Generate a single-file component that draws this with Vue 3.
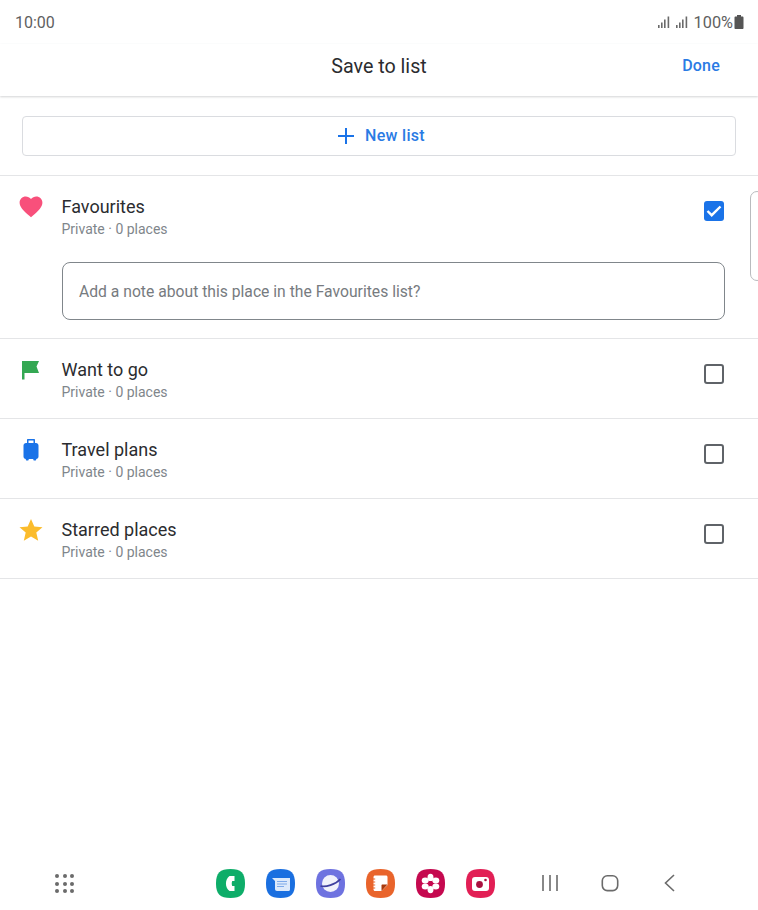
<script setup>
const lists = [
  { name: 'Favourites', icon: 'heart', checked: true },
  { name: 'Want to go', icon: 'flag', checked: false },
  { name: 'Travel plans', icon: 'bag', checked: false },
  { name: 'Starred places', icon: 'star', checked: false },
]
const squircle = 'M14.5 0C25 0 29 4 29 14.5S25 29 14.5 29 0 25 0 14.5 4 0 14.5 0Z'
const dots = [0, 1, 2, 3, 4, 5, 6, 7, 8]
</script>

<template>
  <div class="page">
    <div class="status">
      <span class="time">10:00</span>
      <span class="status-right">
        <svg class="signal" width="13" height="12" viewBox="0 0 13 12"><g fill="#6a6a6a"><rect x="0" y="9" width="1.6" height="3"/><rect x="3" y="6.5" width="1.6" height="5.5"/><rect x="6" y="3.5" width="1.6" height="8.5"/><rect x="9.6" y="0.5" width="1.6" height="11.5"/></g></svg>
        <svg class="signal" width="13" height="12" viewBox="0 0 13 12"><g fill="#6a6a6a"><rect x="0" y="9" width="1.6" height="3"/><rect x="3" y="6.5" width="1.6" height="5.5"/><rect x="6" y="3.5" width="1.6" height="8.5"/><rect x="9.6" y="0.5" width="1.6" height="11.5"/></g></svg>
        <span class="pct">100%</span>
        <svg class="battery" width="10" height="14" viewBox="0 0 10 14"><path fill="#555" d="M3 0h4v1.5h1.4c.7 0 1.1.5 1.1 1.1v10.3c0 .6-.4 1.1-1.1 1.1H1.6C.9 14 .5 13.5.5 12.9V2.6c0-.6.4-1.1 1.1-1.1H3Z"/></svg>
      </span>
    </div>

    <header class="header">
      <span class="title">Save to list</span>
      <span class="done">Done</span>
    </header>

    <section class="new-wrap">
      <button class="new-btn">
        <svg width="18" height="18" viewBox="0 0 18 18"><path d="M9 1v16M1 9h16" stroke="#1a73e8" stroke-width="2" fill="none"/></svg>
        <span>New list</span>
      </button>
    </section>

    <section v-for="l in lists" :key="l.name" class="item">
      <div class="row">
        <span class="icon">
          <svg v-if="l.icon === 'heart'" width="24" height="24" viewBox="0 0 24 24"><path fill="#f8507b" d="M12 22.3 10.3 20.8C4.4 15.4.6 12 .6 7.7.6 4.3 3.3 1.6 6.8 1.6c1.9 0 3.9.9 5.2 2.4 1.3-1.5 3.300-2.400 5.200-2.400 3.500 0 6.200 2.700 6.200 6.100 0 4.300-3.800 7.700-9.700 13.100Z"/></svg>
          <svg v-else-if="l.icon === 'flag'" width="24" height="24" viewBox="0 0 24 24"><path fill="#34a853" d="M3 3h17l-2.500 5.500L20 15H5.500v6.500H3Z"/></svg>
          <svg v-else-if="l.icon === 'bag'" width="24" height="24" viewBox="0 0 24 24"><path fill="#1a73e8" d="M9 1h6c.6 0 1 .4 1 1v3h1c1.400 0 2.500 1.100 2.500 2.500v11c0 1.300-1 2.400-2.300 2.500v.5c0 .6-.4 1-1 1h-.9c-.6 0-1-.4-1-1V21H9.700v.5c0 .6-.4 1-1 1h-.9c-.6 0-1-.4-1-1V21c-1.300-.1-2.300-1.200-2.300-2.500v-11C4.500 6.100 5.600 5 7 5h1V2c0-.6.400-1 1-1Zm.5 1.500V5h5V2.500Z"/></svg>
          <svg v-else width="24" height="24" viewBox="0 0 24 24"><path fill="#fbbc2c" d="m12 .9 3.300 7.600 8.200.7-6.200 5.400 1.900 8.100L12 18.500l-7.200 4.200 1.900-8.100L.5 9.200l8.200-.7Z"/></svg>
        </span>
        <div class="text">
          <div class="name">{{ l.name }}</div>
          <div class="meta">Private · 0 places</div>
        </div>
        <span v-if="l.checked" class="check on">
          <svg width="20" height="20" viewBox="0 0 20 20"><path d="m3.500 10 4.200 4.200 8.800-8.700" stroke="#fff" stroke-width="2.400" fill="none"/></svg>
        </span>
        <span v-else class="check"></span>
      </div>
      <div v-if="l.checked" class="note">Add a note about this place in the Favourites list?</div>
    </section>

    <span class="handle"></span>

    <footer class="dock">
      <span class="grid"><i v-for="d in dots" :key="d"></i></span>
      <div class="apps">
        <svg width="29" height="29" viewBox="0 0 29 29"><path fill="#0ead69" :d="squircle"/><path fill="#fff" d="M13.500 7h5v5h-2.300c-.6 1.500-.6 3.300 0 5h2.300v5h-5C8.800 18.500 8.800 10.500 13.500 7Z"/></svg>
        <svg width="29" height="29" viewBox="0 0 29 29"><path fill="#1a6fe0" :d="squircle"/><path fill="#dce9fb" d="M6 9h18v11.500c0 .8-.6 1.500-1.500 1.500H11c-1.200 0-2-.8-2-2V12Z"/><path stroke="#7da9ea" stroke-width="1.200" d="M11 12.500h10M11 15h10M11 17.500h7"/></svg>
        <svg width="29" height="29" viewBox="0 0 29 29"><path fill="#6e72e0" :d="squircle"/><circle cx="14.500" cy="14.500" r="8.500" fill="#f1f1fb"/><path fill="none" stroke="#3f3f9e" stroke-width="1.800" d="M4.500 17c5 1.500 15-1.500 20-7"/></svg>
        <svg width="29" height="29" viewBox="0 0 29 29"><path fill="#e9642b" :d="squircle"/><path fill="#fff" d="M9 6.500h11c.8 0 1.500.7 1.500 1.500v8l-6 6H9c-.8 0-1.500-.7-1.500-1.500V8c0-.8.700-1.500 1.500-1.500Z"/><path stroke="#e9642b" stroke-width="1.100" d="M6.800 10h2.400M6.800 13h2.400M6.800 16h2.400M6.800 19h2.400"/><path fill="#a8390d" d="M21.500 15.500h-5c-.6 0-1 .4-1 1v5.500Z"/></svg>
        <svg width="29" height="29" viewBox="0 0 29 29"><path fill="#c5094f" :d="squircle"/><g fill="#fff"><ellipse cx="14.500" cy="8.400" rx="3" ry="3.600"/><ellipse cx="14.500" cy="20.600" rx="3" ry="3.600"/><ellipse cx="9.200" cy="11.400" rx="3.500" ry="3"/><ellipse cx="19.800" cy="11.400" rx="3.500" ry="3"/><ellipse cx="9.200" cy="17.600" rx="3.500" ry="3"/><ellipse cx="19.800" cy="17.600" rx="3.500" ry="3"/></g><circle cx="14.500" cy="14.500" r="1.200" fill="#c5094f"/></svg>
        <svg width="29" height="29" viewBox="0 0 29 29"><path fill="#e21f55" :d="squircle"/><rect x="6" y="8" width="17" height="14" rx="3" fill="#fff"/><circle cx="13.500" cy="15.500" r="3.400" fill="#a9103f"/><circle cx="19.500" cy="11" r="1.300" fill="#a9103f"/></svg>
      </div>
      <div class="nav">
        <svg width="18" height="18" viewBox="0 0 18 18"><path d="M2 1v16M9 1v16M16 1v16" stroke="#6b6b6b" stroke-width="1.600" fill="none"/></svg>
        <svg width="18" height="18" viewBox="0 0 18 18"><rect x="1.300" y="1.800" width="15.400" height="14.800" rx="5" stroke="#6b6b6b" stroke-width="1.600" fill="none"/></svg>
        <svg width="18" height="18" viewBox="0 0 18 18"><path d="M13 1 4.500 9 13 17" stroke="#6b6b6b" stroke-width="1.600" fill="none"/></svg>
      </div>
    </footer>
  </div>
</template>

<style>
html, body { margin: 0; background: #fff; }
</style>

<style scoped>
.page {
  position: relative;
  width: 758px;
  height: 910px;
  overflow: hidden;
  display: flex;
  flex-direction: column;
  background: #fff;
  font-family: Roboto, "Liberation Sans", sans-serif;
  color: #202124;
}
.status {
  height: 44px;
  flex: none;
  display: flex;
  align-items: center;
  justify-content: space-between;
  padding: 0 14px 0 15px;
  color: #5f5f5f;
  font-size: 16px;
}
.status-right { display: flex; align-items: center; }
.signal { margin-right: 5px; }
.pct { font-size: 16.3px; margin-right: 1px; }
.header {
  position: relative;
  height: 52px;
  flex: none;
  display: flex;
  align-items: center;
  justify-content: center;
  box-sizing: border-box;
  padding-bottom: 7px;
  margin-bottom: 1px;
  box-shadow: 0 1px 2px rgba(60, 64, 67, 0.22);
}
.title { font-size: 19.7px; color: #2b2c2f; }
.done {
  position: absolute;
  right: 38px;
  top: 12px;
  font-size: 16px;
  font-weight: 500;
  color: #2a7be4;
  letter-spacing: 0.2px;
}
.new-wrap {
  flex: none;
  height: 79px;
  box-sizing: border-box;
  padding: 19px 22px 0;
  border-bottom: 1px solid #e4e5e7;
}
.new-btn {
  width: 100%;
  height: 40px;
  display: flex;
  align-items: center;
  justify-content: center;
  gap: 10px;
  padding: 0 0 1px 4px;
  border: 1px solid #dadce0;
  border-radius: 4px;
  background: #fff;
  color: #2a7be4;
  font: 500 16px Roboto, sans-serif;
  letter-spacing: 0.3px;
}
.item {
  flex: none;
  border-bottom: 1px solid #e4e5e7;
}
.row {
  height: 79px;
  box-sizing: border-box;
  display: flex;
  align-items: flex-start;
  padding: 19px 34px 0 19px;
}
.icon { width: 24px; height: 24px; flex: none; margin-right: 18.5px; }
.text { flex: 1; }
.name { font-size: 18px; line-height: 24px; color: #2b2c2f; }
.meta { font-size: 14px; line-height: 20px; color: #80868b; }
.check {
  width: 20px;
  height: 20px;
  box-sizing: border-box;
  margin-top: 6px;
  border: 2px solid #5f6368;
  border-radius: 3px;
  flex: none;
}
.check.on {
  border: 0;
  background: #1a73e8;
}
.check svg { display: block; }
.note {
  box-sizing: border-box;
  height: 58px;
  margin: 7px 33px 18px 62px;
  padding-left: 16px;
  display: flex;
  align-items: center;
  border: 1px solid #80868b;
  border-radius: 8px;
  font-size: 15.7px;
  color: #777b80;
}
.handle {
  position: absolute;
  left: 750px;
  top: 191px;
  width: 14px;
  height: 90px;
  box-sizing: border-box;
  border: 1px solid #b9bbbe;
  border-radius: 7px;
  background: #fff;
}
.dock {
  margin-top: auto;
  height: 41px;
  flex: none;
  display: flex;
  align-items: flex-start;
  padding-left: 55px;
  box-sizing: border-box;
}
.dock svg { display: block; }
.grid {
  width: 20px;
  height: 20px;
  display: grid;
  grid-template-columns: repeat(3, 4px);
  grid-auto-rows: 4px;
  gap: 3.5px;
  margin-top: 5px;
}
.grid i { background: #6b6b6b; border-radius: 50%; }
.apps {
  display: flex;
  gap: 21px;
  margin-left: 140.5px;
}
.nav {
  display: flex;
  gap: 42px;
  margin-left: 46px;
  margin-top: 5px;
}
</style>
